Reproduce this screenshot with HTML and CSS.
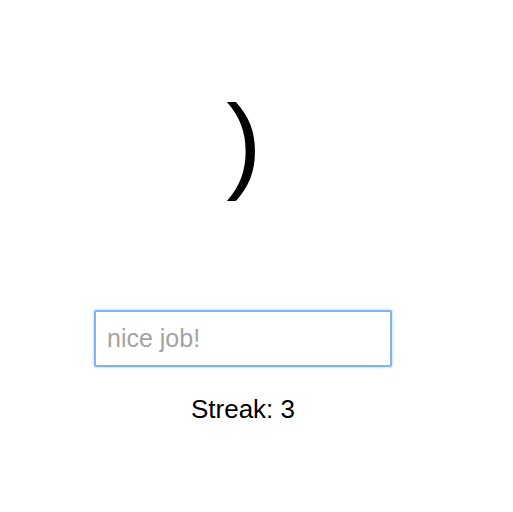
FILE: index.html
```html
<!DOCTYPE html>
<html>
<head>
<meta charset="utf-8">
<link rel="stylesheet" href="styles.css">
</head>
<body>
<main class="app">
  <div class="glyph">)</div>
  <input class="answer" type="text" placeholder="nice job!">
  <div class="streak">Streak: 3</div>
</main>
</body>
</html>
```
FILE: styles.css
```css
html, body {
  margin: 0;
  padding: 0;
  background: #fff;
}
.app {
  width: 486px;
  display: flex;
  flex-direction: column;
  align-items: center;
  font-family: "Liberation Sans", Arial, sans-serif;
  color: #000;
}
.glyph {
  margin-top: 72px;
  font-size: 106px;
  line-height: 140px;
  height: 140px;
  padding-left: 2px;
}
.answer {
  box-sizing: border-box;
  margin-top: 98px;
  width: 298px;
  height: 57px;
  border: 2px solid #7eb4f4;
  border-radius: 2px;
  box-shadow: 0 0 3px #9cc6f7;
  outline: none;
  padding: 0 11px;
  font-family: "Liberation Sans", Arial, sans-serif;
  font-size: 25px;
  color: #000;
}
.answer::placeholder {
  color: #a3a3a3;
}
.streak {
  margin-top: 27px;
  font-size: 26px;
}
```
